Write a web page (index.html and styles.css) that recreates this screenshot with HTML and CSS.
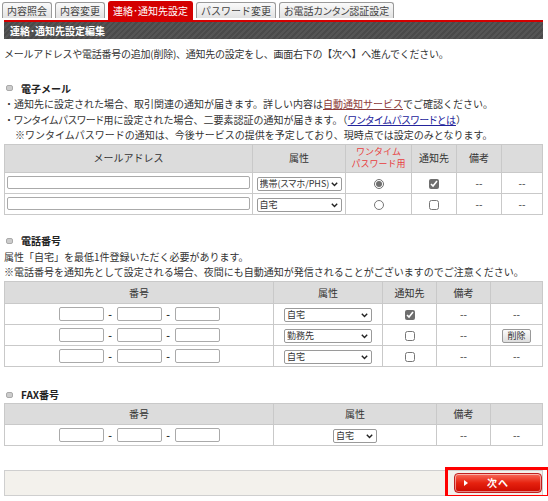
FILE: index.html
```html
<!DOCTYPE html>
<html lang="ja">
  <head>
    <meta charset="UTF-8" />
    <title>連絡・通知先設定編集</title>
    <link rel="stylesheet" href="styles.css">
  </head>
  <body>
    <div class="page">
      <ul class="tabs">
        <li class="tab">内容照会</li>
        <li class="tab">内容変更</li>
        <li class="tab active">連絡･通知先設定</li>
        <li class="tab">パスワード変更</li>
        <li class="tab narrow">お電話カンタン認証設定</li>
      </ul>
      <div class="title-bar">連絡･通知先設定編集</div>

      <p class="intro">メールアドレスや電話番号の追加(削除)、通知先の設定をし、画面右下の【次へ】へ進んでください。</p>

      <!-- 電子メール -->
      <div class="section mail-section">
        <h3 class="heading"><span class="mark"></span>電子メール</h3>
        <p class="note">・通知先に設定された場合、取引関連の通知が届きます。詳しい内容は<a class="link-red" href="#">自動通知サービス</a>でご確認ください。</p>
        <p class="note">・<span class="kana">ワンタイムパスワード</span>用に設定された場合、二要素認証の通知が届きます。（<a class="link-blue kana" href="#">ワンタイムパスワードとは</a>）</p>
        <p class="note indent">※ワンタイムパスワードの通知は、今後サービスの提供を予定しており、現時点では設定のみとなります。</p>

        <table class="grid mail">
          <colgroup>
            <col style="width: 248px" />
            <col style="width: 93px" />
            <col style="width: 66px" />
            <col style="width: 45px" />
            <col style="width: 45px" />
            <col />
          </colgroup>
          <tr class="head tall">
            <th>メールアドレス</th>
            <th>属性</th>
            <th class="otp">ワンタイム<br />パスワード用</th>
            <th>通知先</th>
            <th>備考</th>
            <th></th>
          </tr>
          <tr>
            <td><input type="text" class="mail-input" /></td>
            <td>
              <span class="sel sel-mail">
                <select>
                  <option>携帯(スマホ/PHS)</option>
                  <option>自宅</option>
                  <option>勤務先</option>
                </select>
                <svg width="7" height="5" viewBox="0 0 7 5"><path d="M0.8 0.8 L3.5 3.6 L6.2 0.8" fill="none" stroke="#222" stroke-width="1.4" /></svg>
              </span>
            </td>
            <td><input type="radio" name="otp" checked /></td>
            <td><input type="checkbox" checked /></td>
            <td>--</td>
            <td>--</td>
          </tr>
          <tr>
            <td><input type="text" class="mail-input" /></td>
            <td>
              <span class="sel sel-mail">
                <select>
                  <option>自宅</option>
                  <option>携帯(スマホ/PHS)</option>
                  <option>勤務先</option>
                </select>
                <svg width="7" height="5" viewBox="0 0 7 5"><path d="M0.8 0.8 L3.5 3.6 L6.2 0.8" fill="none" stroke="#222" stroke-width="1.4" /></svg>
              </span>
            </td>
            <td><input type="radio" name="otp" /></td>
            <td><input type="checkbox" /></td>
            <td>--</td>
            <td>--</td>
          </tr>
        </table>
      </div>

      <!-- 電話番号 -->
      <div class="section phone-section">
        <h3 class="heading"><span class="mark"></span>電話番号</h3>
        <p class="note">属性「自宅」を最低1件登録いただく必要があります。</p>
        <p class="note">※電話番号を通知先として設定される場合、夜間にも自動通知が発信されることがございますのでご注意ください。</p>

        <table class="grid phone">
          <colgroup>
            <col style="width: 269px" />
            <col style="width: 109px" />
            <col style="width: 54px" />
            <col style="width: 54px" />
            <col />
          </colgroup>
          <tr class="head">
            <th>番号</th>
            <th>属性</th>
            <th>通知先</th>
            <th>備考</th>
            <th></th>
          </tr>
          <tr>
            <td>
              <div class="tel">
                <input type="text" /><span>-</span><input type="text" /><span>-</span><input type="text" />
              </div>
            </td>
            <td>
              <span class="sel sel-tel">
                <select>
                  <option>自宅</option>
                  <option>勤務先</option>
                  <option>携帯</option>
                </select>
                <svg width="7" height="5" viewBox="0 0 7 5"><path d="M0.8 0.8 L3.5 3.6 L6.2 0.8" fill="none" stroke="#222" stroke-width="1.4" /></svg>
              </span>
            </td>
            <td><input type="checkbox" checked /></td>
            <td>--</td>
            <td>--</td>
          </tr>
          <tr>
            <td>
              <div class="tel">
                <input type="text" /><span>-</span><input type="text" /><span>-</span><input type="text" />
              </div>
            </td>
            <td>
              <span class="sel sel-tel">
                <select>
                  <option>勤務先</option>
                  <option>自宅</option>
                  <option>携帯</option>
                </select>
                <svg width="7" height="5" viewBox="0 0 7 5"><path d="M0.8 0.8 L3.5 3.6 L6.2 0.8" fill="none" stroke="#222" stroke-width="1.4" /></svg>
              </span>
            </td>
            <td><input type="checkbox" /></td>
            <td>--</td>
            <td><button class="btn-del">削除</button></td>
          </tr>
          <tr>
            <td>
              <div class="tel">
                <input type="text" /><span>-</span><input type="text" /><span>-</span><input type="text" />
              </div>
            </td>
            <td>
              <span class="sel sel-tel">
                <select>
                  <option>自宅</option>
                  <option>勤務先</option>
                  <option>携帯</option>
                </select>
                <svg width="7" height="5" viewBox="0 0 7 5"><path d="M0.8 0.8 L3.5 3.6 L6.2 0.8" fill="none" stroke="#222" stroke-width="1.4" /></svg>
              </span>
            </td>
            <td><input type="checkbox" /></td>
            <td>--</td>
            <td>--</td>
          </tr>
        </table>
      </div>

      <!-- FAX番号 -->
      <div class="section fax-section">
        <h3 class="heading"><span class="mark"></span>FAX番号</h3>
        <table class="grid fax">
          <colgroup>
            <col style="width: 269px" />
            <col style="width: 163px" />
            <col style="width: 54px" />
            <col />
          </colgroup>
          <tr class="head">
            <th>番号</th>
            <th>属性</th>
            <th>備考</th>
            <th></th>
          </tr>
          <tr>
            <td>
              <div class="tel">
                <input type="text" /><span>-</span><input type="text" /><span>-</span><input type="text" />
              </div>
            </td>
            <td>
              <span class="sel sel-fax">
                <select>
                  <option>自宅</option>
                  <option>勤務先</option>
                </select>
                <svg width="7" height="5" viewBox="0 0 7 5"><path d="M0.8 0.8 L3.5 3.6 L6.2 0.8" fill="none" stroke="#222" stroke-width="1.4" /></svg>
              </span>
            </td>
            <td>--</td>
            <td>--</td>
          </tr>
        </table>
      </div>

      <div class="footer">
        <div class="next-frame">
          <button class="btn-next"><span class="arrow"></span>次へ</button>
        </div>
      </div>
    </div>
  </body>
</html>
```

FILE: styles.css
```css
/* General */
body {
  margin: 0;
  background-color: #fff;
  color: #333;
  font-family: "Noto Sans CJK JP", "Noto Sans", sans-serif;
  font-size: 10px;
}

.page {
  width: 539px;
  padding: 1px 5px 0 4px;
}

p,
h3 {
  margin: 0;
}

/* Tabs */
.tabs {
  display: flex;
  align-items: flex-end;
  gap: 3px;
  margin: 0 0 0 -2px;
  padding: 0;
  list-style: none;
}

.tab {
  height: 15px;
  line-height: 15px;
  padding: 0 4px;
  border: 1px solid #9a9a9a;
  border-bottom: none;
  border-radius: 3px 3px 0 0;
  background: linear-gradient(#fafafa, #e2e2e2);
  color: #444;
  white-space: nowrap;
  margin-bottom: 2px;
}

.tab.narrow {
  font-feature-settings: "palt";
}

.tab.active {
  height: 18px;
  line-height: 18px;
  margin-bottom: 0;
  border-color: #d40000;
  background: #d40000;
  color: #fff;
}

.title-bar {
  height: 17px;
  line-height: 17px;
  padding-left: 6px;
  border-top: 2px solid #d40000;
  background: repeating-linear-gradient(-45deg, #555 0 2px, #4a4a4a 2px 4px);
  color: #fff;
  font-weight: bold;
}

.intro {
  margin-top: 7px;
  line-height: 16px;
  letter-spacing: -0.25px;
}

/* Sections */
.mail-section {
  margin-top: 18px;
}

.phone-section {
  margin-top: 18px;
}

.fax-section {
  margin-top: 20px;
}

.heading {
  display: flex;
  align-items: center;
  height: 16px;
  font-size: 10px;
  font-weight: bold;
  color: #222;
}

.mark {
  width: 5px;
  height: 4px;
  margin: 0 8px 0 2px;
  border: 1px solid #aaa;
  border-radius: 2px;
  background: #ccc;
}

.note {
  line-height: 15.5px;
}

.note.indent {
  padding-left: 11px;
}

.kana {
  font-feature-settings: "palt";
}

.link-red {
  color: #8c3b3b;
}

.link-blue {
  color: #23239b;
}

/* Tables */
.grid {
  width: 539px;
  border-collapse: collapse;
  table-layout: fixed;
}

.mail,
.phone {
  margin-top: 1px;
}

.grid th,
.grid td {
  border: 1px solid #c9c9c9;
  text-align: center;
  padding: 0;
  height: 20px;
}

.grid th {
  background-color: #dcdcdc;
  font-weight: normal;
  color: #333;
}

.phone .head th {
  height: 21px;
}

.grid .tall th {
  height: 27px;
  line-height: 12px;
}

.grid th.otp {
  color: #e83c3c;
  font-size: 9px;
  line-height: 12px;
}

.mail-input {
  display: block;
  box-sizing: border-box;
  width: 243px;
  height: 13px;
  margin: 0 auto;
  border: 1px solid #aaa;
  border-radius: 2px;
  padding: 0;
}

.tel {
  display: flex;
  justify-content: center;
  align-items: center;
}

.tel input {
  box-sizing: border-box;
  width: 45px;
  height: 14px;
  border: 1px solid #aaa;
  border-radius: 2px;
  padding: 0;
}

.tel span {
  width: 13px;
  text-align: center;
  font-weight: bold;
}

/* Select with drawn chevron */
.sel {
  position: relative;
  display: inline-block;
  vertical-align: middle;
}

.sel select {
  appearance: none;
  display: block;
  box-sizing: border-box;
  width: 100%;
  height: 14px;
  padding: 0 0 0 2px;
  font-family: inherit;
  font-size: 9px;
  font-feature-settings: "palt";
  line-height: 12px;
  color: #333;
  border: 1px solid #9a9a9a;
  border-radius: 2px;
  background: #fff;
}

.sel svg {
  position: absolute;
  right: 4px;
  top: 5px;
  pointer-events: none;
}

.sel-mail {
  width: 85px;
}

.sel-tel {
  width: 88px;
}

.sel-fax {
  width: 44px;
}

input[type="checkbox"],
input[type="radio"] {
  width: 10px;
  height: 10px;
  margin: 0;
  vertical-align: middle;
  accent-color: #6e6e6e;
}

.btn-del {
  height: 14px;
  padding: 0 4px;
  font-family: inherit;
  font-size: 9px;
  line-height: 12px;
  color: #333;
  border: 1px solid #999;
  border-radius: 2px;
  background: linear-gradient(#fbfbfb, #dedede);
}

/* Footer */
.footer {
  position: relative;
  height: 24px;
  margin-top: 24px;
  border: 1px solid #cfcfcf;
  background-color: #f3f1ec;
}

.next-frame {
  position: absolute;
  right: -8px;
  top: -4px;
  padding: 3px 5px 2px 6px;
  border: 3px solid #f00;
}

.btn-next {
  position: relative;
  display: block;
  width: 88px;
  height: 20px;
  border: 1px solid #c02020;
  border-radius: 4px;
  box-shadow: inset 0 0 0 1px rgba(255, 255, 255, 0.5);
  background: linear-gradient(#f86a5a, #e6220f 50%, #cc0a00);
  color: #fff;
  font-family: inherit;
  font-size: 10px;
  font-weight: bold;
  letter-spacing: 1px;
}

.arrow {
  position: absolute;
  left: 9px;
  top: 6px;
  border-left: 4px solid #fff;
  border-top: 3px solid transparent;
  border-bottom: 3px solid transparent;
}
```
